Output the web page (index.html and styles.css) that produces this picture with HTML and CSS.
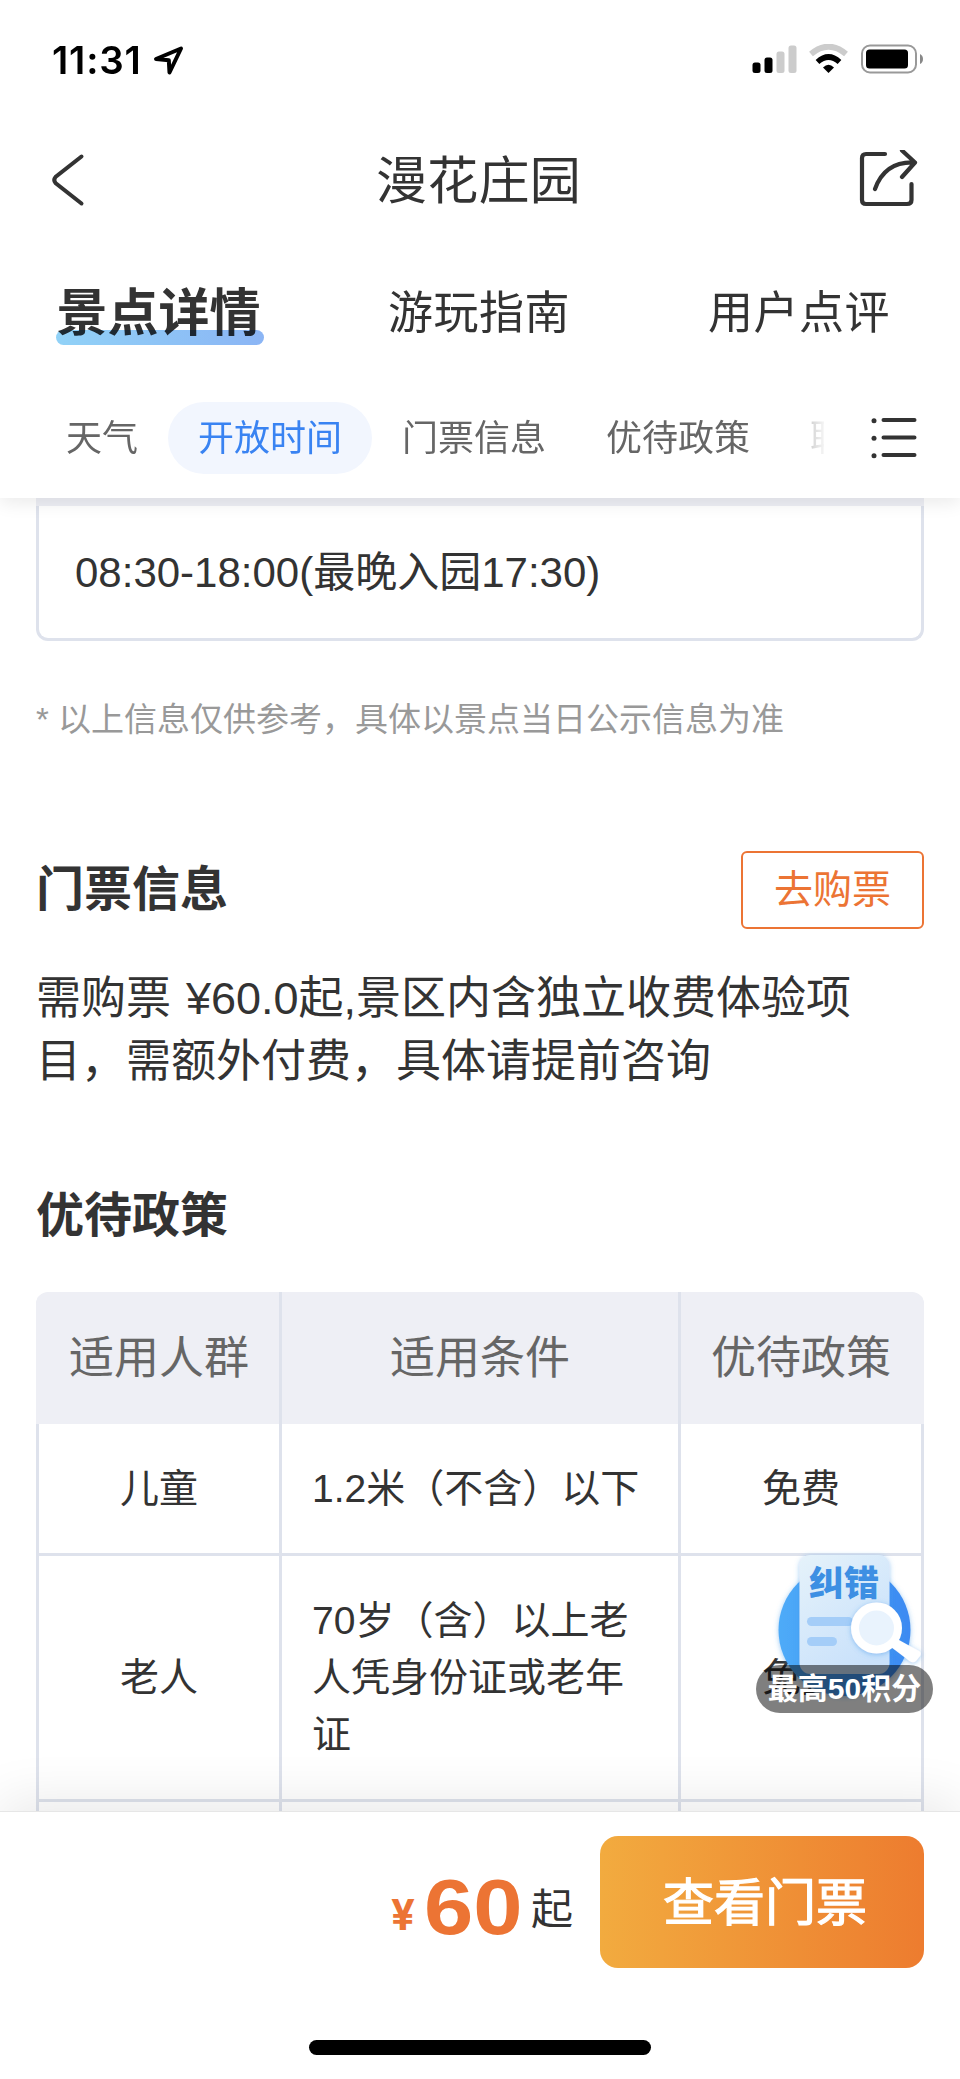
FILE: index.html
```html
<!DOCTYPE html>
<html lang="zh-CN">
<head>
<meta charset="utf-8">
<title>漫花庄园</title>
<link rel="stylesheet" href="styles.css">
</head>
<body>
<div class="screen">
  <header class="top">
    <div class="status">
      <span class="time">11:31</span>
      <svg class="loc" width="32" height="32" viewBox="0 0 32 32"><path d="M3 15 28 4.500 16.500 28.500 15.800 16.200Z" fill="none" stroke="#000" stroke-width="4" stroke-linejoin="round"/></svg>
      <svg class="indicators" width="174" height="32" viewBox="0 0 174 32">
        <rect x="2.500" y="18.500" width="8" height="10.500" rx="2.500"/>
        <rect x="14.500" y="13.500" width="8" height="15.500" rx="2.500"/>
        <rect x="26.500" y="7.500" width="8" height="21.500" rx="2.500" fill="#ccc"/>
        <rect x="38.500" y="1.500" width="8" height="27.500" rx="2.500" fill="#ccc"/>
        <path d="M61 10Q78.500-4.500 96 10" fill="none" stroke="#ccc" stroke-width="6"/>
        <path d="M67.500 18Q78.500 8 89.500 18" fill="none" stroke="#000" stroke-width="5.500"/>
        <path d="M73 23.500Q78.500 18 84 23.500L78.500 29Z"/>
        <rect x="112" y="1.500" width="54" height="27" rx="8" fill="none" stroke="#999" stroke-width="2"/>
        <rect x="116" y="5.500" width="42" height="19" rx="3.500"/>
        <path d="M170 10q3 1.500 3 5t-3 5z" fill="#888"/>
      </svg>
    </div>
    <div class="titlebar">
      <svg width="36" height="56" viewBox="0 0 36 56"><path d="M31.500 4.500 5.500 25Q3 28 5.500 31L31.500 51.500" fill="none" stroke="#333" stroke-width="4" stroke-linecap="round"/></svg>
      <h1>漫花庄园</h1>
      <svg width="60" height="60" viewBox="0 0 60 60"><g fill="none" stroke="#333" stroke-width="4.200" stroke-linecap="round" stroke-linejoin="round"><path d="M26 4H7Q3 4 3 8V50Q3 54 7 54H48Q52.500 54 52.500 50V34"/><path d="M16 39Q26 11 56 12.500M43 .5 56 12.500 43 27"/></g></svg>
    </div>
    <nav class="tabs">
      <span class="tab on">景点详情</span>
      <span class="tab">游玩指南</span>
      <span class="tab">用户点评</span>
    </nav>
    <div class="subbar">
      <nav class="subs">
        <span>天气</span><span class="pill">开放时间</span><span>门票信息</span><span>优待政策</span><span>联系方式</span>
      </nav>
      <svg class="list" width="48" height="42" viewBox="0 0 48 42"><g fill="#333"><circle cx="4" cy="3.700" r="2.500"/><circle cx="4" cy="21.200" r="2.500"/><circle cx="4" cy="38.700" r="2.500"/></g><path d="M13.500 3H44.500M13.500 20.500H44.500M13.500 38H44.500" stroke="#333" stroke-width="4" stroke-linecap="round"/></svg>
    </div>
  </header>

  <main class="content">
    <div class="hours"><div class="hours-head"></div><div class="hours-row">08:30-18:00(最晚入园17:30)</div></div>
    <p class="note">* 以上信息仅供参考，具体以景点当日公示信息为准</p>
    <div class="section-head"><h2>门票信息</h2><a class="buy">去购票</a></div>
    <p class="desc">需购票 ¥60.0起,景区内含独立收费体验项目，需额外付费，具体请提前咨询</p>
    <h2 class="policy-title">优待政策</h2>
    <div class="policy">
      <div class="cell head">适用人群</div><div class="cell head">适用条件</div><div class="cell head">优待政策</div>
      <div class="cell">儿童</div><div class="cell cond">1.2米（不含）以下</div><div class="cell">免费</div>
      <div class="cell">老人</div><div class="cell cond">70岁（含）以上老人凭身份证或老年证</div><div class="cell">免费</div>
      <div class="cell"></div><div class="cell"></div><div class="cell"></div>
    </div>
  </main>

  <footer class="bottom">
    <div class="order">
      <span class="yen">¥</span><span class="price">60</span><span class="from">起</span>
      <a class="cta">查看门票</a>
    </div>
    <div class="home"></div>
  </footer>

  <div class="report">
    <svg width="178" height="164" viewBox="0 0 178 164">
      <defs>
        <linearGradient id="disc"><stop offset="0" stop-color="#4eabf8"/><stop offset="1" stop-color="#3c8af2"/></linearGradient>
        <linearGradient id="doc" x2=".6" y2="1"><stop offset="0" stop-color="#e5f2fa"/><stop offset="1" stop-color="#c9e1fb"/></linearGradient>
        <filter id="soft" x="-30%" y="-30%" width="160%" height="160%"><feDropShadow dx="0" dy="1" stdDeviation="2.500" flood-color="#3d95e8" flood-opacity=".5"/></filter>
      </defs>
      <circle cx="88.500" cy="80" r="66" fill="url(#disc)" filter="url(#soft)"/>
      <rect x="43.500" y="5" width="90" height="119" rx="11" fill="url(#doc)" filter="url(#soft)"/>
      <rect x="51" y="67" width="46" height="9" rx="4.500" fill="#a4cdf8"/>
      <rect x="51" y="87" width="30" height="9" rx="4.500" fill="#a4cdf8"/>
      <g filter="url(#soft)"><circle cx="120.500" cy="78" r="21.500" fill="#e9f3fd" stroke="#fff" stroke-width="8"/><path d="M135 97 142 89.500 163 101Q166 103 164 106L160 111Q157 113.500 153.500 111Z" fill="#fff"/></g>
    </svg>
    <span class="report-title">纠错</span>
    <span class="report-pill">最高50积分</span>
  </div>
</div>
</body>
</html>
```
FILE: styles.css
```css
* { box-sizing: border-box; }
body {
  margin: 0;
  background: #fff;
  color: #333;
  font-family: "Liberation Sans", "Noto Sans CJK SC", sans-serif;
}
h1, h2, p { margin: 0; font-weight: 400; }
svg { display: block; flex: none; }
.screen {
  position: relative;
  width: 960px;
  height: 2079px;
  display: flex;
  flex-direction: column;
  overflow: hidden;
}
.top {
  height: 498px;
  flex: none;
  z-index: 2;
  background: #fff;
  box-shadow: 0 4px 18px rgba(0, 0, 0, .09);
}
.status {
  height: 120px;
  padding: 0 36px 0 52px;
  display: flex;
  align-items: center;
}
.time {
  width: 101px;
  font: 600 38.500px/40px Inter, sans-serif;
  color: #000;
  letter-spacing: .8px;
}
.indicators { margin-left: auto; }
.titlebar {
  height: 120px;
  padding: 0 41px 0 50px;
  display: flex;
  align-items: center;
  justify-content: space-between;
}
.titlebar h1 { font-size: 51px; line-height: 60px; padding: 4px 0 0 12px; letter-spacing: .3px; }
.tabs {
  height: 144px;
  padding: 0 70px 0 56px;
  display: flex;
  align-items: center;
}
.tab {
  padding-top: 4px;
  font-size: 45px;
  line-height: 66px;
  letter-spacing: .5px;
}
.tab + .tab { margin-left: 138px; }
.tab.on + .tab { margin-left: 124px; }
.tab.on {
  position: relative;
  width: 208px;
  padding: 3px 3px 0 0;
  text-align: center;
  font-size: 51px;
  font-weight: 700;
  letter-spacing: 0;
}
.tab.on::after {
  content: "";
  position: absolute;
  left: 0;
  right: 0;
  top: 52px;
  height: 15px;
  border-radius: 8px;
  background: linear-gradient(90deg, #91d2f7, #8bb5f5);
  mix-blend-mode: multiply;
}
.subbar {
  height: 108px;
  padding: 0 42px 0 36px;
  display: flex;
  align-items: center;
  justify-content: space-between;
}
.subs {
  width: 788px;
  overflow: hidden;
  display: flex;
  -webkit-mask-image: linear-gradient(90deg, #000 732px, transparent 792px);
  mask-image: linear-gradient(90deg, #000 732px, transparent 792px);
}
.subs span {
  flex: none;
  height: 72px;
  padding: 0 30px;
  font-size: 36px;
  line-height: 74px;
  color: #666;
}
.subs .pill { color: #3983f2; background: #f2f6fe; border-radius: 36px; }
.content { flex: 1; min-height: 0; overflow: hidden; padding: 0 36px; }
.hours-head { height: 8px; background: #eeeff5; }
.hours-row {
  height: 135px;
  padding-left: 36px;
  border: 3px solid #dee2ec;
  border-top: 0;
  border-radius: 0 0 12px 12px;
  font-size: 42px;
  line-height: 134px;
}
.note { margin-top: 54px; font-size: 33px; line-height: 50px; color: #999; }
.section-head {
  height: 78px;
  margin-top: 106px;
  display: flex;
  align-items: center;
  justify-content: space-between;
}
h2 { font-size: 48px; line-height: 70px; font-weight: 700; }
.buy {
  width: 183px;
  height: 78px;
  border: 2px solid #ec7434;
  border-radius: 6px;
  color: #ec7434;
  text-align: center;
  font-size: 39px;
  line-height: 73px;
}
.desc { margin-top: 38px; font-size: 45px; line-height: 63px; word-spacing: 2.500px; }
.policy-title { margin-top: 88px; }
.policy {
  margin-top: 41px;
  display: grid;
  grid-template-columns: 243px 399px 246px;
  grid-template-rows: 132px 132px 246px 60px;
  border-radius: 12px 12px 0 0;
  overflow: hidden;
}
.cell {
  border-left: 3px solid #dee2ec;
  border-bottom: 3px solid #dee2ec;
  font-size: 39px;
  line-height: 57px;
  display: flex;
  align-items: center;
  justify-content: center;
}
.cell:nth-child(3n) { border-right: 3px solid #dee2ec; }
.cond { justify-content: flex-start; padding: 0 30px; }
.head {
  border-bottom: 0;
  background: #eeeff5;
  color: #666;
  font-size: 45px;
}
.head:first-child { border-left-color: #eeeff5; }
.head:nth-child(3) { border-right-color: #eeeff5; }
.bottom {
  height: 268px;
  flex: none;
  z-index: 2;
  background: #fff;
  border-top: 1px solid #e6e6e6;
  padding: 24px 36px 24px 0;
  display: flex;
  flex-direction: column;
  justify-content: space-between;
  box-shadow: 0 -10px 50px rgba(0, 0, 0, .09);
}
.order { display: flex; height: 132px; justify-content: flex-end; align-items: flex-start; }
.yen {
  color: #ec7434;
  font-size: 42px;
  line-height: 158px;
  font-weight: 700;
  font-family: Inter, sans-serif;
}
.price {
  width: 99px;
  margin-left: 9px;
  color: #ec7434;
  font-size: 77px;
  line-height: 142px;
  font-weight: 700;
  transform: scaleX(1.15);
  transform-origin: left;
}
.from { font-size: 42px; line-height: 148px; margin: 0 27px 0 8px; }
.cta {
  width: 324px;
  height: 132px;
  padding-left: 6px;
  border-radius: 18px;
  background: linear-gradient(90deg, #f2ab3f, #ed7c2f);
  color: #fff;
  text-align: center;
  font-size: 51px;
  line-height: 136px;
  -webkit-text-stroke: 1.200px #fff;
}
.home { width: 342px; height: 15px; margin-left: 309px; border-radius: 8px; background: #000; }
.report { position: absolute; left: 756px; top: 1550px; width: 178px; height: 164px; z-index: 1; }
.report-title {
  position: absolute;
  left: 53px;
  top: 9px;
  font-size: 35px;
  line-height: 50px;
  font-weight: 900;
  color: #3d8fe3;
}
.report-pill {
  position: absolute;
  left: 0;
  top: 115px;
  width: 177px;
  border-radius: 24px;
  background: rgba(0, 0, 0, .5);
  color: #fff;
  text-align: center;
  font-size: 30px;
  line-height: 48px;
  font-weight: 700;
}
```
